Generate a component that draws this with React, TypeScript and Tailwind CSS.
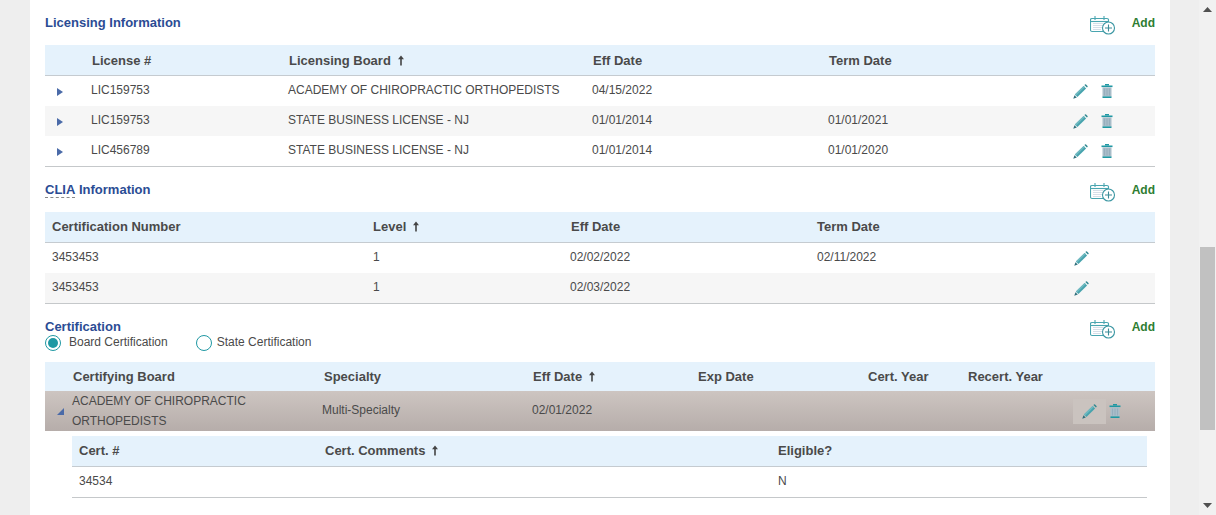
import type { ReactNode } from 'react';

const font = { fontFamily: '"Liberation Sans", Arial, sans-serif' };

function SortArrow() {
  return (
    <svg width="8" height="11" viewBox="0 0 8 11" className="ml-[6px] inline-block align-[-1px]">
      <path d="M4 0.5 L7 4.2 H4.8 V10.5 H3.2 V4.2 H1 Z" fill="#444" />
    </svg>
  );
}

function Caret({ open }: { open?: boolean }) {
  if (open) {
    return (
      <svg width="7" height="7" viewBox="0 0 7 7">
        <path d="M7 0 V7 H0 Z" fill="#4a6aa8" />
      </svg>
    );
  }
  return (
    <svg width="6" height="8" viewBox="0 0 6 8">
      <path d="M0 0 L6 4 L0 8 Z" fill="#4a6aa8" />
    </svg>
  );
}

function Pencil() {
  return (
    <svg width="15" height="15" viewBox="0 0 15 15">
      <path d="M10.6 1.9 L13.1 4.4 L4.4 13.1 L1.9 10.6 Z" fill="#47a3ad" />
      <path d="M10.6 1.9 L2.9 9.6 L1.9 10.6 L3.1 11.8 L11.8 3.1 Z" fill="#6fb9c1" />
      <path d="M11.4 1.1 L12 0.5 Q12.5 0.1 13 0.5 L14.5 2 Q14.9 2.5 14.5 3 L13.9 3.6 Z" fill="#2f8790" />
      <path d="M1.4 11.2 L3.8 13.6 L0.3 14.7 Z" fill="#2f6f7c" />
    </svg>
  );
}

function Trash() {
  return (
    <svg width="12" height="14" viewBox="0 0 12 14">
      <rect x="4" y="0" width="4" height="1.5" fill="#1f98a3" />
      <rect x="0.5" y="1.5" width="11" height="1.6" fill="#1f98a3" />
      <rect x="1.5" y="3.4" width="9" height="9.2" fill="#a9bdc9" />
      <path d="M3.5 4.5 V11.5 M6 4.5 V11.5 M8.5 4.5 V11.5" stroke="#93aaba" strokeWidth="0.8" />
      <rect x="1.5" y="12.4" width="9" height="1.6" fill="#1f98a3" />
    </svg>
  );
}

function CalendarPlus() {
  return (
    <svg width="26" height="19" viewBox="0 0 26 19" fill="none">
      <path d="M14 15.5 H2 Q0.5 15.5 0.5 14 V3.5 Q0.5 2.5 2 2.5 H17 Q18.5 2.5 18.5 3.5 V7" stroke="#49a5b0" strokeWidth="1.1" />
      <path d="M0.5 5.5 H18.5" stroke="#49a5b0" strokeWidth="1.1" />
      <path d="M5 0 V4 M14 0 V4" stroke="#49a5b0" strokeWidth="1.1" />
      <path d="M3.5 7.5 H13 M3.5 9.5 H13 M3.5 11.5 H12 M3.5 13.5 H11" stroke="#aebfd2" strokeWidth="1" strokeDasharray="1 1" />
      <circle cx="18.5" cy="12" r="6" fill="#fff" stroke="#3c97a3" strokeWidth="1.1" />
      <path d="M18.5 8.5 V15.5 M15 12 H22" stroke="#3c8c98" strokeWidth="1.1" />
    </svg>
  );
}

function SectionTitle({ children, small }: { children: ReactNode; small?: boolean }) {
  return (
    <div className={small ? 'flex h-[17px] items-start justify-between' : 'flex h-[33px] items-start justify-between'}>
      <div className="text-[13px] font-bold leading-[22px] text-[#2b4c94]">{children}</div>
      <div className="flex items-start">
        <div className="mt-[4px]">
          <CalendarPlus />
        </div>
        <div className="ml-[16px] text-[12px] font-bold leading-[22px] text-[#2e7d32]">Add</div>
      </div>
    </div>
  );
}

function Head({ label, sort }: { label: string; sort?: boolean }) {
  return (
    <div className="whitespace-nowrap text-[13px] font-bold text-[#4a4a4a]">
      {label}
      {sort && <SortArrow />}
    </div>
  );
}

function Cell({ children }: { children?: ReactNode }) {
  return <div className="pb-[2px] text-[12px] leading-[20px] text-[#4a4a4a]">{children}</div>;
}

function RowIcons({ trash = true }: { trash?: boolean }) {
  return (
    <div className="flex items-center gap-[13px]">
      <Pencil />
      {trash && <Trash />}
    </div>
  );
}

const licensingRows = [
  ['LIC159753', 'ACADEMY OF CHIROPRACTIC ORTHOPEDISTS', '04/15/2022', ''],
  ['LIC159753', 'STATE BUSINESS LICENSE - NJ', '01/01/2014', '01/01/2021'],
  ['LIC456789', 'STATE BUSINESS LICENSE - NJ', '01/01/2014', '01/01/2020'],
];

const cliaRows = [
  ['3453453', '1', '02/02/2022', '02/11/2022'],
  ['3453453', '1', '02/03/2022', ''],
];

export default function App() {
  return (
    <div className="flex h-[515px] overflow-hidden bg-[#eeeeee]" style={font}>
      <div className="w-[30px] shrink-0" />

      <div className="w-[1140px] shrink-0 bg-white px-[15px]">
        <section className="pt-[12px]">
          <SectionTitle>Licensing Information</SectionTitle>
          <div className="grid h-[31px] grid-cols-[47px_197px_304px_236px_245px_1fr] items-center border-b border-[#c5cbd0] bg-[#e5f2fc] pt-[2px]">
            <div />
            <Head label="License #" />
            <Head label="Licensing Board" sort />
            <Head label="Eff Date" />
            <Head label="Term Date" />
            <div />
          </div>
          {licensingRows.map((row, i) => (
            <div
              key={i}
              className={`grid h-[30px] grid-cols-[46px_197px_304px_236px_245px_1fr] items-center ${i === 1 ? 'bg-[#f6f6f6]' : 'bg-white'}`}
            >
              <div className="flex pl-[12px] pt-[1px]">
                <Caret />
              </div>
              <Cell>{row[0]}</Cell>
              <Cell>{row[1]}</Cell>
              <Cell>{row[2]}</Cell>
              <Cell>{row[3]}</Cell>
              <RowIcons />
            </div>
          ))}
          <div className="h-px bg-[#c5c8ca]" />
        </section>

        <section className="pt-[12px]">
          <SectionTitle>
            <span className="inline-block h-[19px] border-b border-dashed border-[#888]">CLIA</span> Information
          </SectionTitle>
          <div className="grid h-[31px] grid-cols-[321px_198px_246px_255px_1fr] items-center border-b border-[#c5cbd0] bg-[#e5f2fc] pl-[7px]">
            <Head label="Certification Number" />
            <Head label="Level" sort />
            <Head label="Eff Date" />
            <Head label="Term Date" />
            <div />
          </div>
          {cliaRows.map((row, i) => (
            <div
              key={i}
              className={`grid h-[30px] grid-cols-[321px_197px_247px_257px_1fr] items-center pl-[7px] ${i === 1 ? 'bg-[#f6f6f6]' : 'bg-white'}`}
            >
              <Cell>{row[0]}</Cell>
              <Cell>{row[1]}</Cell>
              <Cell>{row[2]}</Cell>
              <Cell>{row[3]}</Cell>
              <RowIcons trash={false} />
            </div>
          ))}
          <div className="h-px bg-[#c5c8ca]" />
        </section>

        <section className="pt-[12px]">
          <SectionTitle small>Certification</SectionTitle>
          <div className="flex h-[29px] items-start text-[12px] leading-[18px] text-[#4a4a4a]">
            <div className="mt-[2px] flex h-[16px] w-[16px] items-center justify-center rounded-full border border-[#1f98a3]">
              <div className="h-[10px] w-[10px] rounded-full bg-[#1f98a3]" />
            </div>
            <span className="ml-[8px]">Board Certification</span>
            <div className="ml-[28px] mt-[2px] h-[16px] w-[16px] rounded-full border border-[#1f98a3]" />
            <span className="ml-[5px]">State Certification</span>
          </div>

          <div className="grid h-[29px] grid-cols-[28px_251px_209px_165px_170px_100px_1fr] items-center bg-[#e5f2fc]">
            <div />
            <Head label="Certifying Board" />
            <Head label="Specialty" />
            <Head label="Eff Date" sort />
            <Head label="Exp Date" />
            <Head label="Cert. Year" />
            <Head label="Recert. Year" />
          </div>
          <div className="grid h-[40px] grid-cols-[27px_250px_210px_541px_1fr] items-center bg-gradient-to-b from-[#cdc5c1] to-[#b6adaa]">
            <div className="flex pl-[12px] pt-[1px]">
              <Caret open />
            </div>
            <div className="text-[12px] leading-[20px] text-[#4a4a4a]">
              ACADEMY OF CHIROPRACTIC
              <br />
              ORTHOPEDISTS
            </div>
            <Cell>Multi-Specialty</Cell>
            <Cell>02/01/2022</Cell>
            <div className="flex items-center">
              <div className="flex h-[25px] w-[33px] items-center justify-center bg-[#cac3bf]">
                <Pencil />
              </div>
              <div className="ml-[3px]">
                <Trash />
              </div>
            </div>
          </div>

          <div className="ml-[27px] mr-[8px] mt-[5px]">
            <div className="grid h-[31px] grid-cols-[246px_453px_1fr] items-center border-b border-[#c5cbd0] bg-[#e5f2fc] pl-[7px]">
              <Head label="Cert. #" />
              <Head label="Cert. Comments" sort />
              <Head label="Eligible?" />
            </div>
            <div className="grid h-[30px] grid-cols-[246px_453px_1fr] items-center pl-[7px]">
              <Cell>34534</Cell>
              <Cell />
              <Cell>N</Cell>
            </div>
            <div className="h-px bg-[#c5c8ca]" />
          </div>
        </section>
      </div>

      <div className="w-[29px] shrink-0" />

      <div className="flex w-[17px] shrink-0 flex-col items-center bg-[#f1f1f1]">
        <svg width="9" height="5" viewBox="0 0 9 5" className="mt-[7px] shrink-0">
          <path d="M4.5 0 L9 5 H0 Z" fill="#505050" />
        </svg>
        <div className="mt-[235px] h-[183px] w-[15px] shrink-0 bg-[#c1c1c1]" />
        <svg width="9" height="5" viewBox="0 0 9 5" className="mt-[73px] shrink-0">
          <path d="M4.5 5 L9 0 H0 Z" fill="#505050" />
        </svg>
      </div>
    </div>
  );
}
